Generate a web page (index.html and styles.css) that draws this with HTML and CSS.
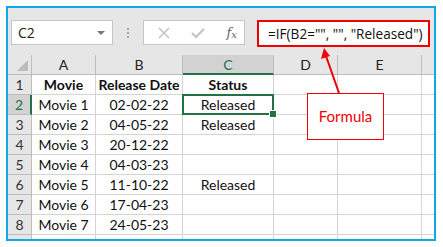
FILE: index.html
```html
<!DOCTYPE html>
<html lang="en">
<head>
    <meta charset="UTF-8">
    <meta name="viewport" content="width=device-width, initial-scale=1.0">
    <title>IF formula</title>
    <link rel="stylesheet" href="styles.css">
</head>
<body>
    <div class="window">
        <div class="formula-bar">
            <div class="name-box">
                <span>C2</span>
                <span class="caret"></span>
            </div>
            <div class="grip"><i></i><i></i><i></i></div>
            <div class="fx-buttons">
                <svg width="12" height="12" viewBox="0 0 12 12"><path d="M1 1 L11 11 M11 1 L1 11" stroke="#c4c4c4" stroke-width="1.6" fill="none"/></svg>
                <svg width="14" height="12" viewBox="0 0 14 12"><path d="M1 6 L5 10 L13 2" stroke="#c4c4c4" stroke-width="2.2" fill="none"/></svg>
                <span class="fx">f<sub>x</sub></span>
            </div>
            <div class="formula">=IF(B2="", "", "Released")</div>
        </div>

        <div class="sheet">
            <div class="corner"></div>
            <div class="col-head">A</div>
            <div class="col-head">B</div>
            <div class="col-head active">C</div>
            <div class="col-head">D</div>
            <div class="col-head">E</div>
            <div class="col-head"></div>

            <div class="row-head">1</div>
            <div class="cell bold">Movie</div>
            <div class="cell bold">Release Date</div>
            <div class="cell bold">Status</div>
            <div class="cell"></div><div class="cell"></div><div class="cell"></div>

            <div class="row-head active">2</div>
            <div class="cell">Movie 1</div>
            <div class="cell">02-02-22</div>
            <div class="cell selected">Released</div>
            <div class="cell"></div><div class="cell"></div><div class="cell"></div>

            <div class="row-head">3</div>
            <div class="cell">Movie 2</div>
            <div class="cell">04-05-22</div>
            <div class="cell">Released</div>
            <div class="cell"></div><div class="cell"></div><div class="cell"></div>

            <div class="row-head">4</div>
            <div class="cell">Movie 3</div>
            <div class="cell">20-12-22</div>
            <div class="cell"></div>
            <div class="cell"></div><div class="cell"></div><div class="cell"></div>

            <div class="row-head">5</div>
            <div class="cell">Movie 4</div>
            <div class="cell">04-03-23</div>
            <div class="cell"></div>
            <div class="cell"></div><div class="cell"></div><div class="cell"></div>

            <div class="row-head">6</div>
            <div class="cell">Movie 5</div>
            <div class="cell">11-10-22</div>
            <div class="cell">Released</div>
            <div class="cell"></div><div class="cell"></div><div class="cell"></div>

            <div class="row-head">7</div>
            <div class="cell">Movie 6</div>
            <div class="cell">17-04-23</div>
            <div class="cell"></div>
            <div class="cell"></div><div class="cell"></div><div class="cell"></div>

            <div class="row-head">8</div>
            <div class="cell">Movie 7</div>
            <div class="cell">24-05-23</div>
            <div class="cell"></div>
            <div class="cell"></div><div class="cell"></div><div class="cell"></div>

            <div class="row-head"></div>
            <div class="cell"></div><div class="cell"></div><div class="cell"></div>
            <div class="cell"></div><div class="cell"></div><div class="cell"></div>
        </div>

        <!-- annotation -->
        <svg class="arrow" width="427" height="231" viewBox="0 0 427 231">
            <path d="M331 85 L318 48" stroke="#f00000" stroke-width="2" fill="none"/>
            <path d="M316 40 L313 51 L322 48 Z" fill="#f00000"/>
        </svg>
        <div class="callout">Formula</div>
    </div>
</body>
</html>
```

FILE: styles.css
```css
* {
    margin: 0;
    padding: 0;
    box-sizing: border-box;
}

body {
    background: #ffffff;
    padding: 6px 0 0 6px;
    font-family: "Open Sans", "Noto Sans", sans-serif;
}

.window {
    position: relative;
    width: 430px;
    height: 235px;
    border: 2px solid #12a8e6;
    background: #e6e6e6;
    overflow: hidden;
}

/* formula bar */
.formula-bar {
    display: flex;
    align-items: flex-start;
    height: 47px;
    padding: 12px 0 0 3px;
}

.name-box {
    display: flex;
    align-items: center;
    justify-content: space-between;
    width: 102px;
    height: 25px;
    padding: 0 7px 0 6px;
    background: #fff;
    border: 1px solid #c6c6c6;
    font-size: 14px;
    color: #222;
}

.caret {
    width: 0;
    height: 0;
    border-left: 4px solid transparent;
    border-right: 4px solid transparent;
    border-top: 4px solid #777;
}

.grip {
    width: 30px;
    height: 25px;
    display: flex;
    flex-direction: column;
    align-items: center;
    justify-content: center;
    gap: 2px;
}

.grip i {
    display: block;
    width: 2px;
    height: 2px;
    background: #a8a8a8;
}

.fx-buttons {
    display: flex;
    align-items: center;
    justify-content: space-between;
    width: 102px;
    height: 25px;
    padding: 0 7px 0 14px;
    background: #fff;
    border: 1px solid #c6c6c6;
}

.fx {
    font-family: "DejaVu Serif", serif;
    font-style: italic;
    font-size: 13px;
    color: #666;
}

.fx sub {
    font-size: 10px;
    vertical-align: -1px;
}

.formula {
    width: 173px;
    height: 27px;
    margin-left: 12px;
    padding: 2px 0 0 9px;
    background: #fff;
    border: 2px solid #f00000;
    font-size: 13.6px;
    line-height: 20px;
    color: #111;
    white-space: nowrap;
}

/* grid */
.sheet {
    display: grid;
    grid-template-columns: 24px 64px 87px 91px 64px 84px 13px;
    grid-auto-rows: 20px;
    font-family: "Lato", sans-serif;
    font-size: 14px;
    color: #111;
}

.corner, .col-head, .row-head {
    background: #e6e6e6;
    border-right: 1px solid #bdbdbd;
    border-bottom: 1px solid #bdbdbd;
    text-align: center;
    line-height: 19px;
    font-size: 14px;
    color: #222;
}

.corner {
    position: relative;
}

.corner::after {
    content: "";
    position: absolute;
    right: 3px;
    bottom: 3px;
    border-left: 11px solid transparent;
    border-bottom: 11px solid #bcbcbc;
}

.col-head.active {
    background: #d2d2d2;
    color: #217346;
    border-bottom: 2px solid #217346;
}

.row-head {
    color: #333;
}

.row-head.active {
    background: #d2d2d2;
    color: #217346;
    border-right: 2px solid #217346;
}

.cell {
    background: #fff;
    border-right: 1px solid #d4d4d4;
    border-bottom: 1px solid #d4d4d4;
    text-align: center;
    line-height: 20px;
    white-space: nowrap;
}

.bold {
    font-weight: bold;
}

.selected {
    position: relative;
}

.selected::after {
    content: "";
    position: absolute;
    top: -1px;
    left: -1px;
    right: -1px;
    bottom: -1px;
    border: 2px solid #217346;
}

.selected::before {
    content: "";
    position: absolute;
    right: -4px;
    bottom: -4px;
    width: 6px;
    height: 6px;
    background: #217346;
    border: 1px solid #fff;
    z-index: 1;
}

/* annotation */
.arrow {
    position: absolute;
    top: 0;
    left: 0;
}

.callout {
    position: absolute;
    left: 299px;
    top: 85px;
    width: 77px;
    height: 47px;
    background: #fff;
    border: 1px solid #f00000;
    color: #f00000;
    font-family: "Lato", sans-serif;
    font-size: 15px;
    line-height: 45px;
    text-align: center;
}
```
